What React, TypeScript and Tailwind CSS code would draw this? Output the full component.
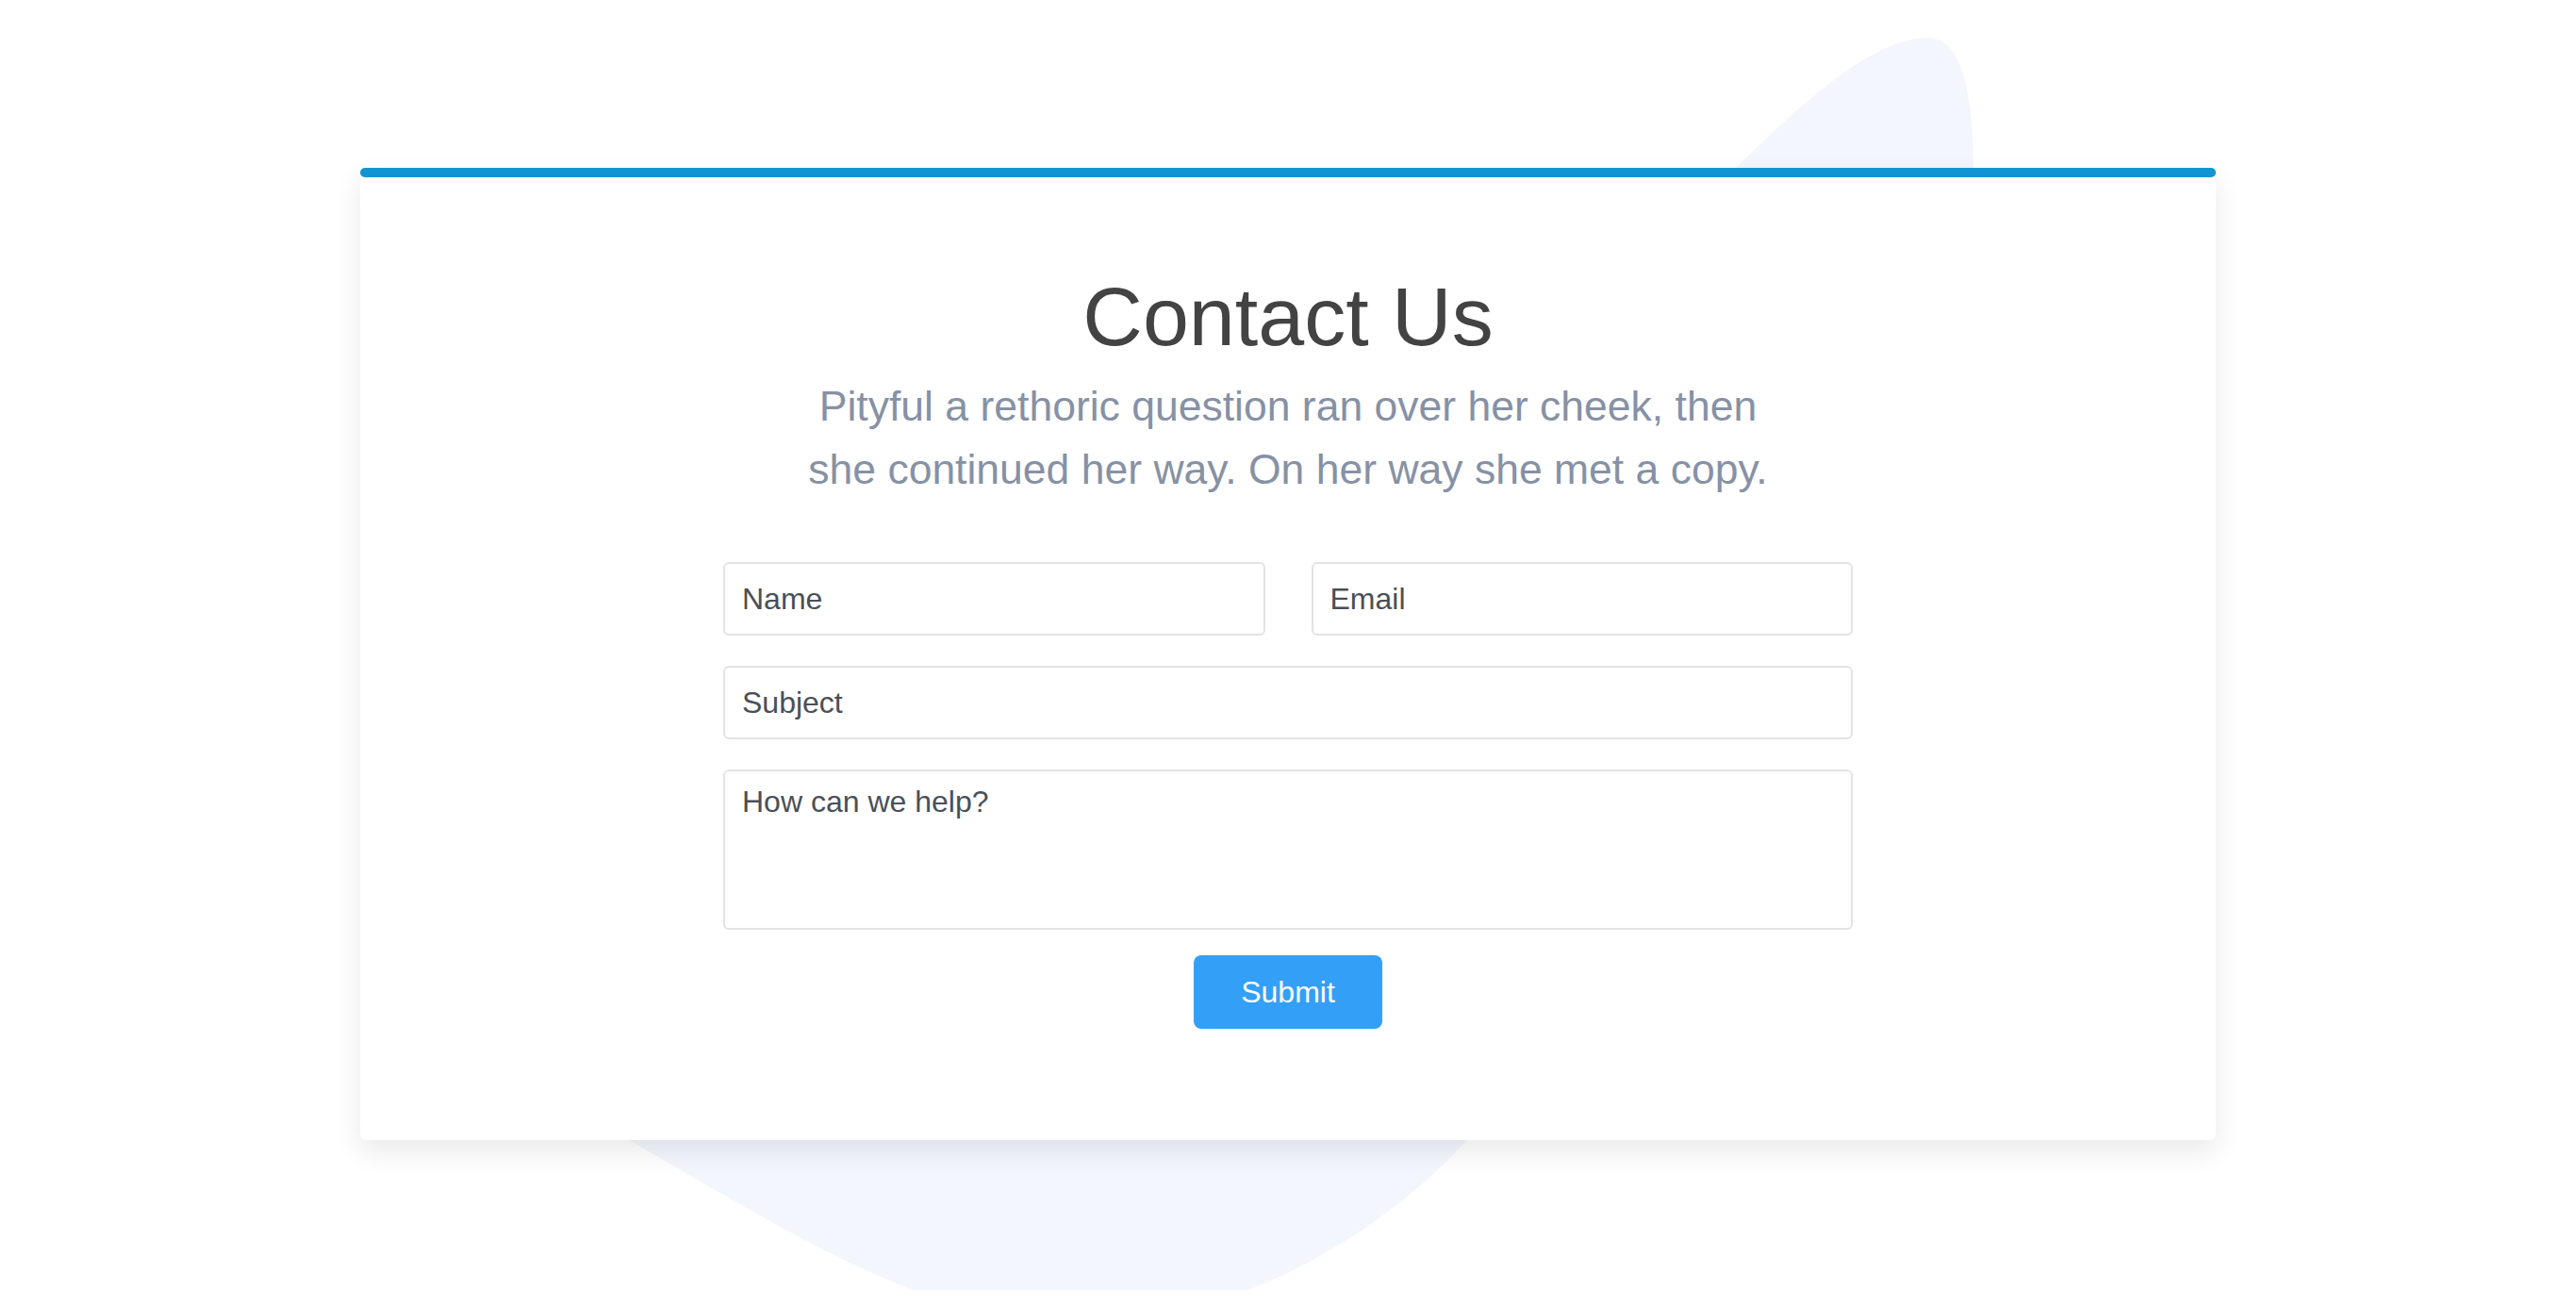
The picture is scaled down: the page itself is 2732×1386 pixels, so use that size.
import React from 'react';

// Decorative blob that peeks out behind the card
const Blob: React.FC = () => (
    <svg
        className="absolute inset-0 w-[2732px] h-[1386px]"
        viewBox="0 0 2732 1386"
        fill="none"
        aria-hidden="true"
    >
        <path
            d="M2044 40 C2072 40 2084 70 2090 120 C2093 150 2093 170 2093 178 L2093 700 L1700 1050 C1640 1110 1600 1160 1555 1210 C1500 1270 1420 1330 1324 1368 L969 1368 C880 1335 790 1280 669 1210 L600 900 L1400 500 L1841 178 C1920 100 1990 40 2044 40 Z"
            fill="#f3f6fd"
        />
    </svg>
);

const inputClass =
    'w-full h-[78px] bg-white border-2 border-[#e3e3e3] rounded-md px-[18px] text-[32px] text-[#4a4f57] placeholder:text-[#4a4f57] outline-none';

const App: React.FC = () => {
    return (
        <div
            className="relative w-full h-[1386px] bg-white overflow-hidden"
            style={{ fontFamily: '"Liberation Sans", Arial, Helvetica, sans-serif' }}
        >
            <Blob />

            <div className="relative pt-[178px] px-[382px]">
                {/* Card */}
                <div className="shadow-[0_12px_30px_rgba(0,0,0,0.09)] rounded-md bg-white">
                    <div className="h-[10px] bg-[#1294d3] rounded-full" />
                    <div className="pt-[95px] pb-[118px] flex flex-col items-center">
                        <h1 className="text-[88px] leading-[106px] text-[#434343] font-normal">Contact Us</h1>
                        <p className="mt-[8px] text-[44.5px] leading-[67px] text-[#8691a5] text-center">
                            Pityful a rethoric question ran over her cheek, then
                            <br />
                            she continued her way. On her way she met a copy.
                        </p>

                        {/* Form */}
                        <form className="mt-[65px] w-[1198px] flex flex-col gap-8" onSubmit={(e) => e.preventDefault()}>
                            <div className="grid grid-cols-2 gap-x-[49px]">
                                <input className={inputClass} placeholder="Name" />
                                <input className={inputClass} placeholder="Email" />
                            </div>
                            <input className={inputClass} placeholder="Subject" />
                            <textarea
                                className="w-full h-[170px] bg-white border-2 border-[#e3e3e3] rounded-md px-[18px] pt-[12px] text-[32px] leading-[40px] text-[#4a4f57] placeholder:text-[#4a4f57] outline-none resize-none"
                                placeholder="How can we help?"
                            />
                            <div className="flex justify-center -mt-[5px]">
                                <button
                                    type="submit"
                                    className="w-[200px] h-[78px] bg-[#349ff7] rounded-lg text-white text-[32px]"
                                >
                                    Submit
                                </button>
                            </div>
                        </form>
                    </div>
                </div>
            </div>
        </div>
    );
};

export default App;
